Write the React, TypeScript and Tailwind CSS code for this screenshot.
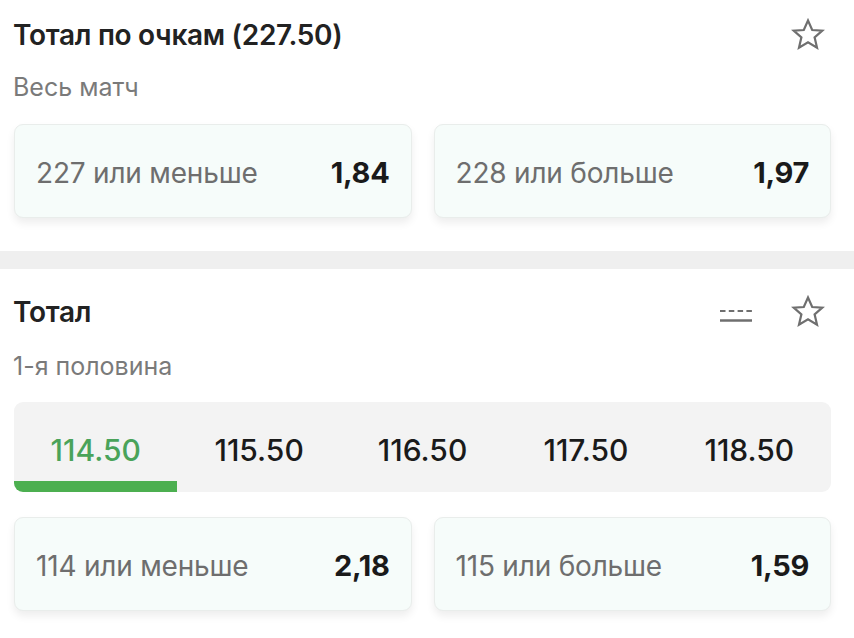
import React from 'react'

function StarIcon() {
  return (
    <svg viewBox="0 0 34 34" className="h-[34px] w-[34px]" fill="none" stroke="#6f6f6f" strokeWidth="2.2" strokeLinejoin="miter">
      <polygon points="17,2.5 21.2,12 31.3,12.6 23.6,19.3 26,29.6 17,24.2 8,29.6 10.4,19.3 2.7,12.6 12.8,12" />
    </svg>
  )
}

function LinesIcon() {
  return (
    <svg viewBox="0 0 34 16" className="mt-[7px] h-[16px] w-[34px]" fill="none" stroke="#6f6f6f">
      <line x1="1" y1="3" x2="33" y2="3" strokeWidth="2" strokeDasharray="5.5 3.3" />
      <line x1="1" y1="12.5" x2="33" y2="12.5" strokeWidth="2.5" />
    </svg>
  )
}

function OddCard({ label, odd }: { label: string; odd: string }) {
  return (
    <div className="flex h-[94px] flex-1 items-center justify-between rounded-[9px] border border-[#e9edeb] bg-[#f6fcfa] px-[21px] pt-[4px] shadow-[0_5px_9px_rgba(0,0,0,0.07)]">
      <span className="text-[28px] tracking-[-0.2px] text-[#6e6e6e]">{label}</span>
      <span className="text-[29px] font-bold tracking-[-0.3px] text-[#1a1a1a]">{odd}</span>
    </div>
  )
}

function Header({ title, sub, lines, subGap }: { title: string; sub: string; lines?: boolean; subGap: string }) {
  return (
    <>
      <div className="flex items-center justify-between">
        <h2 className="text-[28px] font-semibold leading-[36px] tracking-[-0.3px] text-[#222]">{title}</h2>
        <div className="mr-[6px] flex items-center gap-[38px]">
          {lines && <LinesIcon />}
          <StarIcon />
        </div>
      </div>
      <p className={`${subGap} text-[25px] leading-[30px] text-[#7a7a7a]`}>{sub}</p>
    </>
  )
}

const tabs = ['114.50', '115.50', '116.50', '117.50', '118.50']

export default function App() {
  return (
    <div className="h-[638px] w-[854px] overflow-hidden bg-white font-['Inter','Noto_Sans',sans-serif]">
      <section className="pl-[13px] pr-[23px] pt-[17px]">
        <Header title="Тотал по очкам (227.50)" sub="Весь матч" subGap="mt-[19px]" />
        <div className="mt-[22px] flex gap-[22px] pl-px">
          <OddCard label="227 или меньше" odd="1,84" />
          <OddCard label="228 или больше" odd="1,97" />
        </div>
      </section>

      <div className="mt-[33px] h-[18px] bg-[#efefef]" />

      <section className="pl-[13px] pr-[23px] pt-[25px]">
        <Header title="Тотал" sub="1-я половина" lines subGap="mt-[21px]" />
        <div className="mt-[21px] ml-px flex h-[90px] overflow-hidden rounded-[9px] bg-[#f3f3f3]">
          {tabs.map((t, i) => (
            <div key={t} className="relative flex flex-1 items-center justify-center pt-[6px]">
              <span className={i === 0 ? 'text-[30px] font-medium text-[#4aa35a]' : 'text-[30px] font-medium text-[#1a1a1a]'}>{t}</span>
              {i === 0 && <div className="absolute bottom-0 left-0 right-0 h-[11px] bg-[#4caf50]" />}
            </div>
          ))}
        </div>
        <div className="mt-[25px] flex gap-[22px] pl-px">
          <OddCard label="114 или меньше" odd="2,18" />
          <OddCard label="115 или больше" odd="1,59" />
        </div>
      </section>
    </div>
  )
}
